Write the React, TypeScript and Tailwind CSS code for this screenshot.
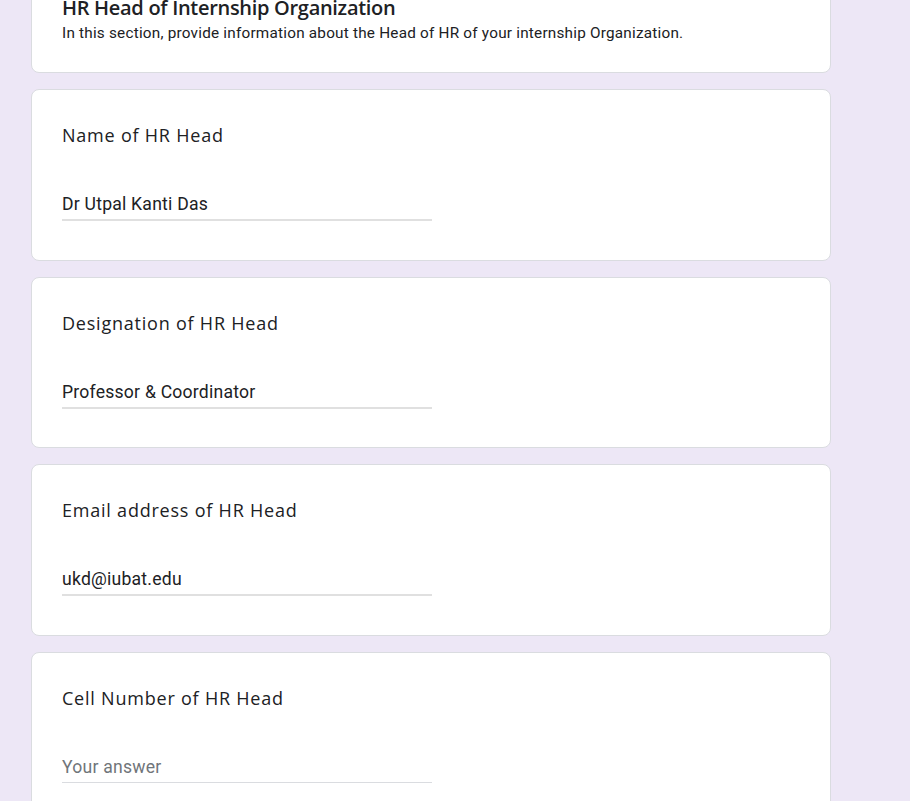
import React from "react";

type Q = { title: string; value?: string; tall: boolean };

const questions: Q[] = [
  { title: "Name of HR Head", value: "Dr Utpal Kanti Das", tall: true },
  { title: "Designation of HR Head", value: "Professor & Coordinator", tall: false },
  { title: "Email address of HR Head", value: "ukd@iubat.edu", tall: true },
  { title: "Cell Number of HR Head", tall: true },
];

function QuestionCard({ q }: { q: Q }) {
  return (
    <div
      className={
        "shrink-0 rounded-lg border border-[#dadce0] bg-white pl-[30px] pt-[33px] " +
        (q.tall ? "h-[172px]" : "h-[171px]")
      }
    >
      <div className="font-['Open_Sans',sans-serif] text-[18px] leading-6 tracking-[0.78px] text-[#202124]">
        {q.title}
      </div>
      <div className="mt-[45px] w-[370px]">
        <div
          className={
            "pb-[3px] font-['Roboto',sans-serif] text-[17.6px] leading-6 tracking-[0.22px] " +
            (q.value ? "text-[#202124]" : "text-[#70757a]")
          }
        >
          {q.value ?? "Your answer"}
        </div>
        <div className={q.value ? "h-[2px] bg-[#e0e0e0]" : "h-px bg-[#dadce0]"} />
      </div>
    </div>
  );
}

export default function App() {
  return (
    <div className="h-[801px] overflow-hidden bg-[#ede7f6]">
      <div className="ml-[31px] mt-[-31px] flex w-[800px] flex-col gap-4">
        <div className="rounded-lg border border-[#dadce0] bg-white pb-[29px] pl-[30px] pt-[24px]">
          <div className="font-['Open_Sans',sans-serif] text-[20px] font-semibold leading-[28px] tracking-[-0.3px] text-[#202124]">
            HR Head of Internship Organization
          </div>
          <div className="mt-[1px] font-['Roboto',sans-serif] text-[15.3px] leading-5 tracking-[0.22px] text-[#202124]">
            In this section, provide information about the Head of HR of your internship Organization.
          </div>
        </div>
        {questions.map((q) => (
          <QuestionCard key={q.title} q={q} />
        ))}
      </div>
    </div>
  );
}
